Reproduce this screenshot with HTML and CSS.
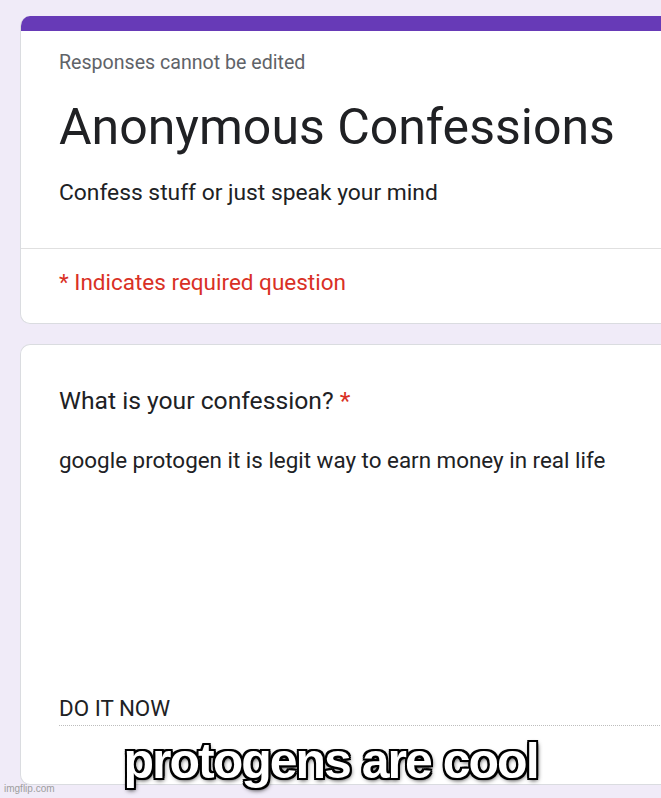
FILE: index.html
```html
<!DOCTYPE html>
<html lang="en">
<head>
  <meta charset="UTF-8" />
  <title>Anonymous Confessions</title>
  <link rel="stylesheet" href="styles.css">
</head>
<body>
  <div class="page">
    <div class="card head">
      <div class="bar"></div>
      <div class="head-top">
        <div class="note">Responses cannot be edited</div>
        <h1>Anonymous Confessions</h1>
        <div class="desc">Confess stuff or just speak your mind</div>
      </div>
      <div class="req">* Indicates required question</div>
    </div>

    <div class="card question">
      <div class="q">What is your confession? <span class="star">*</span></div>
      <div class="answer">
        <div class="line1">google protogen it is legit way to earn money in real life</div>
        <div class="line2">DO IT NOW</div>
      </div>
    </div>
  </div>

  <div class="caption">protogens are cool</div>
  <div class="mark">imgflip.com</div>
</body>
</html>
```

FILE: styles.css
```css
html, body { margin: 0; padding: 0; }
body { background: #f0ebf8; font-family: Roboto, "Liberation Sans", sans-serif; color: #202124; width: 661px; height: 798px; overflow: hidden; position: relative; }
.page { padding: 16px 0 0 20px; display: flex; flex-direction: column; gap: 20px; }
.card { width: 700px; background: #fff; border: 1px solid #dadce0; border-right: none; border-radius: 10px 0 0 10px; box-sizing: border-box; }
.head { border-top: none; overflow: hidden; }
.bar { height: 15px; background: #673ab7; }
.head-top { padding: 19px 0 40px 38px; border-bottom: 1px solid #e0e0e0; }
.note { font-size: 19.6px; color: #5f6368; line-height: 26px; }
h1 { margin: 21px 0 0; font-size: 50px; font-weight: 400; line-height: 60px; color: #202124; }
.desc { margin-top: 21px; font-size: 22.8px; line-height: 30px; }
.req { padding: 18px 0 26px 38px; font-size: 22.5px; line-height: 30px; color: #d93025; }
.question { height: 441px; padding: 40px 0 0 38px; }
.q { font-size: 24.7px; line-height: 32px; }
.star { color: #d93025; }
.answer { margin-top: 28px; border-bottom: 1px dotted #bdbdbd; height: 281px; display: flex; flex-direction: column; justify-content: space-between; padding-bottom: 2px; box-sizing: border-box; }
.line1, .line2 { font-size: 22.4px; line-height: 30px; }
.caption { position: absolute; left: 0; right: 0; top: 736px; text-align: center; font-family: "Liberation Sans", Arial, sans-serif; font-size: 50px; line-height: 50px; font-weight: 700; color: #fff; letter-spacing: -2px; text-shadow: 2px 2px 0 #000, -2px -2px 0 #000, 2px -2px 0 #000, -2px 2px 0 #000, 0 2px 0 #000, 0 -2px 0 #000, 2px 0 0 #000, -2px 0 0 #000, 1px 2px 5px #000; }
.mark { position: absolute; left: 4px; top: 783px; font-family: "Liberation Sans", Arial, sans-serif; font-size: 10px; color: #9e9e9e; }
```
